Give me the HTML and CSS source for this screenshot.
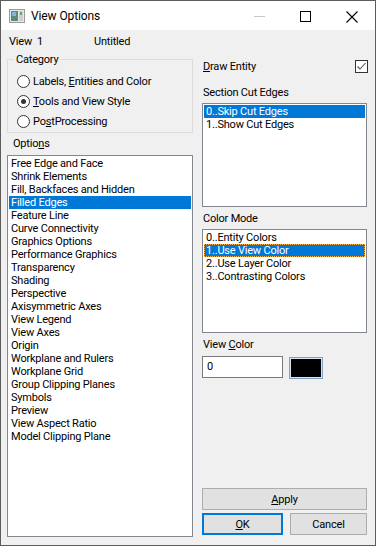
FILE: index.html
```html
<!DOCTYPE html>
<html lang="en">
    <head>
        <meta charset="UTF-8" />
        <meta name="viewport" content="width=device-width, initial-scale=1.0" />
        <title>View Options</title>
        <link rel="stylesheet" href="styles.css">
    </head>
    <body>
        <div id="window">
            <!-- 타이틀 바 -->
            <div class="titlebar">
                <svg class="app-icon" width="16" height="14" viewBox="0 0 16 14">
                    <rect x="0.5" y="0.5" width="15" height="13" fill="#e8e8e8" stroke="#9a9a9a" />
                    <rect x="2" y="2" width="7" height="10" fill="#5a8a7a" />
                    <rect x="3" y="3" width="4" height="4" fill="#7fb8d8" />
                    <rect x="10" y="2" width="4" height="10" fill="#c8d4c8" />
                    <rect x="11" y="3" width="2" height="3" fill="#6aa86a" />
                </svg>
                <span class="title">View Options</span>
                <div class="caption-btns">
                    <svg width="46" height="30" viewBox="0 0 46 30"><line x1="17" y1="15.5" x2="28" y2="15.5" stroke="#c8c8c8" /></svg>
                    <svg width="46" height="30" viewBox="0 0 46 30"><rect x="17.5" y="10.5" width="10" height="10" fill="none" stroke="#000" /></svg>
                    <svg width="46" height="30" viewBox="0 0 46 30"><path d="M17.5 10.5 L28.5 21.5 M28.5 10.5 L17.5 21.5" stroke="#000" stroke-width="1.1" /></svg>
                </div>
            </div>

            <div class="dialog">
                <div class="info">
                    <span class="view-no">View&nbsp; 1</span>
                    <span>Untitled</span>
                </div>
                <div class="columns">
                    <div class="col-left">
                        <fieldset class="group">
                            <legend>Category</legend>
                            <div class="radio"><span class="dot"></span><span>Labels, <u>E</u>ntities and Color</span></div>
                            <div class="radio"><span class="dot on"></span><span><u>T</u>ools and View Style</span></div>
                            <div class="radio"><span class="dot"></span><span>Po<u>s</u>tProcessing</span></div>
                        </fieldset>
                        <div class="label">Optio<u>n</u>s</div>
                        <div class="listbox options-list">
                            <div class="item">Free Edge and Face</div>
                            <div class="item">Shrink Elements</div>
                            <div class="item">Fill, Backfaces and Hidden</div>
                            <div class="item selected">Filled Edges</div>
                            <div class="item">Feature Line</div>
                            <div class="item">Curve Connectivity</div>
                            <div class="item">Graphics Options</div>
                            <div class="item">Performance Graphics</div>
                            <div class="item">Transparency</div>
                            <div class="item">Shading</div>
                            <div class="item">Perspective</div>
                            <div class="item">Axisymmetric Axes</div>
                            <div class="item">View Legend</div>
                            <div class="item">View Axes</div>
                            <div class="item">Origin</div>
                            <div class="item">Workplane and Rulers</div>
                            <div class="item">Workplane Grid</div>
                            <div class="item">Group Clipping Planes</div>
                            <div class="item">Symbols</div>
                            <div class="item">Preview</div>
                            <div class="item">View Aspect Ratio</div>
                            <div class="item">Model Clipping Plane</div>
                        </div>
                    </div>

                    <div class="col-right">
                        <div class="check-row">
                            <span><u>D</u>raw Entity</span>
                            <span class="checkbox">
                                <svg width="11" height="11" viewBox="0 0 11 11"><path d="M1.5 5.5 L4 8 L9.5 2" fill="none" stroke="#555" stroke-width="1.1" /></svg>
                            </span>
                        </div>
                        <div class="label sec-label">Section Cut Edges</div>
                        <div class="listbox small-list">
                            <div class="item selected">0..Skip Cut Edges</div>
                            <div class="item">1..Show Cut Edges</div>
                        </div>
                        <div class="label">Color Mode</div>
                        <div class="listbox small-list">
                            <div class="item">0..Entity Colors</div>
                            <div class="item selected focused">1..Use View Color</div>
                            <div class="item">2..Use Layer Color</div>
                            <div class="item">3..Contrasting Colors</div>
                        </div>
                        <div class="label">View <u>C</u>olor</div>
                        <div class="color-row">
                            <div class="edit">0</div>
                            <div class="swatch"></div>
                        </div>
                        <div class="buttons">
                            <button class="btn apply"><u>A</u>pply</button>
                            <div class="btn-row">
                                <button class="btn ok"><u>O</u>K</button>
                                <button class="btn cancel">Cancel</button>
                            </div>
                        </div>
                    </div>
                </div>
            </div>
        </div>
    </body>
</html>
```

FILE: styles.css
```css
body {
    margin: 0;
    font-family: Roboto, "Liberation Sans", sans-serif;
    font-size: 11px;
    letter-spacing: -0.2px;
    color: #000;
    background-color: #fff;
}
u {
    text-decoration: underline;
    text-underline-offset: 1px;
}

#window {
    width: 376px;
    height: 546px;
    box-sizing: border-box;
    border: 1px solid #5c5c5c;
    display: flex;
    flex-direction: column;
    background-color: #f0f0f0;
}

/* 타이틀 바 */
.titlebar {
    height: 29px;
    background-color: #fff;
    display: flex;
    align-items: center;
}
.app-icon {
    margin-left: 8px;
    margin-right: 6px;
}
.title {
    font-size: 12px;
    letter-spacing: -0.1px;
    flex: 1;
}
.caption-btns {
    display: flex;
    align-self: flex-start;
}
.caption-btns svg {
    display: block;
}

.dialog {
    flex: 1;
    display: flex;
    flex-direction: column;
    padding: 0 8px 8px 6px;
}
.info {
    height: 20px;
    padding-top: 4px;
    box-sizing: border-box;
    line-height: 15px;
    padding-left: 2px;
    display: flex;
}
.view-no {
    width: 85px;
}

.columns {
    flex: 1;
    display: flex;
    gap: 9px;
}
.col-left {
    width: 186px;
    display: flex;
    flex-direction: column;
    padding-top: 2px;
}
.col-right {
    flex: 1;
    display: flex;
    flex-direction: column;
}

.group {
    margin: 0;
    padding: 4px 0 1px 0;
    border: 1px solid #dcdcdc;
}
.group legend {
    margin-left: 6px;
    padding: 0 2px;
    line-height: 15px;
}
.radio {
    height: 20px;
    display: flex;
    align-items: center;
    padding-left: 9px;
}
.dot {
    width: 11px;
    height: 11px;
    border: 1px solid #333;
    border-radius: 50%;
    background-color: #fff;
    margin-right: 3px;
    position: relative;
}
.dot.on::after {
    content: "";
    position: absolute;
    left: 3px;
    top: 3px;
    width: 5px;
    height: 5px;
    border-radius: 50%;
    background-color: #333;
}

.label {
    line-height: 15px;
    margin-top: 3px;
    margin-bottom: 4px;
    padding-left: 6px;
}
.col-right .label {
    padding-left: 1px;
    margin-top: 4px;
    margin-bottom: 3px;
}
.col-right .sec-label {
    margin-top: 11px;
}

.listbox {
    border: 1px solid #828790;
    background-color: #fff;
    padding: 1px 1px 0 1px;
    box-sizing: border-box;
}
.options-list {
    flex: 1;
}
.small-list {
    height: 104px;
}
.item {
    height: 13px;
    line-height: 13px;
    padding-left: 2px;
    white-space: nowrap;
}
.item.selected {
    background-color: #0078d7;
    color: #fff;
}
.item.focused {
    outline: 1px dotted #f7b04a;
    outline-offset: -1px;
}

.check-row {
    margin-top: 9px;
    height: 15px;
    line-height: 15px;
    display: flex;
    justify-content: space-between;
    align-items: center;
    padding-left: 1px;
}
.checkbox {
    width: 11px;
    height: 11px;
    border: 1px solid #333;
    background-color: #fff;
    margin-right: -1px;
    display: flex;
    align-items: center;
    justify-content: center;
}

.color-row {
    display: flex;
    align-items: flex-start;
    margin-top: 1px;
}
.edit {
    width: 81px;
    height: 22px;
    box-sizing: border-box;
    border: 1px solid #7a7a7a;
    background-color: #fff;
    padding-left: 4px;
    line-height: 20px;
}
.swatch {
    width: 34px;
    height: 22px;
    box-sizing: border-box;
    margin-left: 6px;
    margin-top: 1px;
    border: 1px solid #7fa3c6;
    background-color: #000;
    box-shadow: inset 0 0 0 1px #d8e4f0;
}

.buttons {
    margin-top: auto;
    margin-bottom: 2px;
    display: flex;
    flex-direction: column;
    gap: 3px;
}
.btn-row {
    display: flex;
    gap: 7px;
}
.btn {
    font-family: inherit;
    font-size: 11px;
    letter-spacing: -0.2px;
    color: #000;
    height: 22px;
    padding: 0;
    background-color: #e1e1e1;
    border: 1px solid #adadad;
    border-radius: 0;
}
.apply {
    width: 100%;
}
.ok {
    width: 81px;
    border: 2px solid #0078d7;
}
.cancel {
    flex: 1;
}
```
